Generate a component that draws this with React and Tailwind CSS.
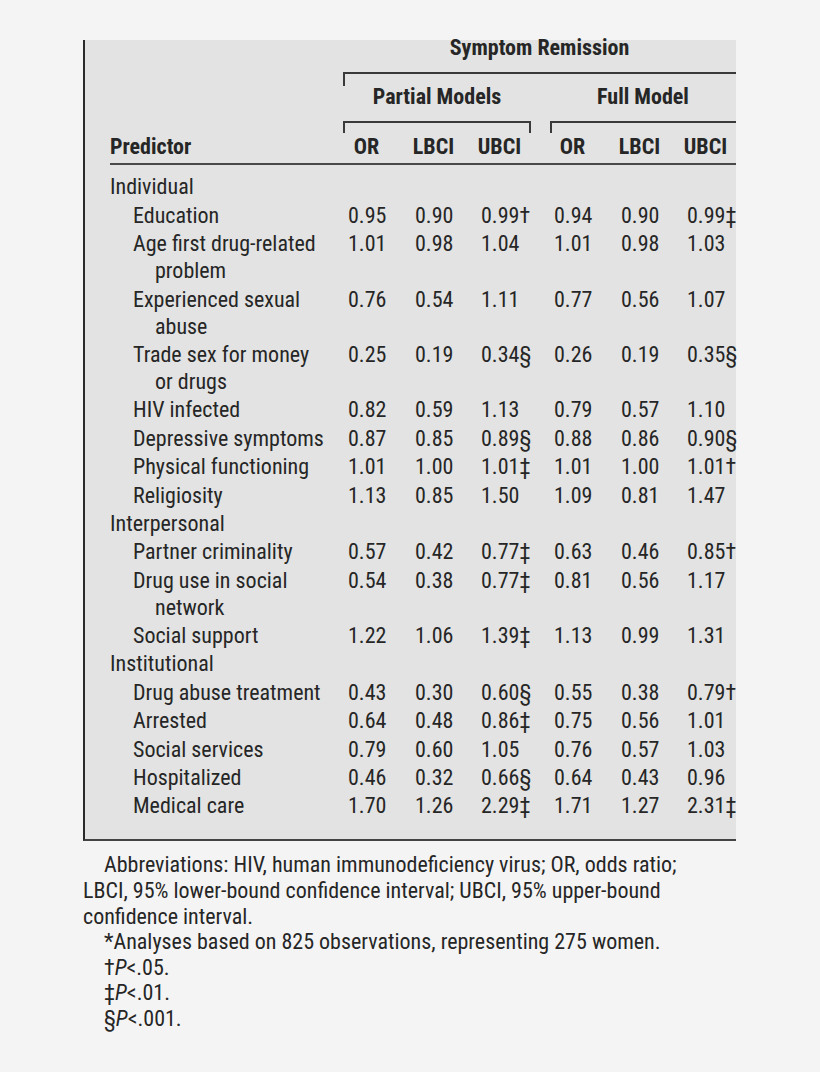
// Regression table: symptom remission predictors, with footnotes

const font = "font-['Roboto_Condensed','Roboto',sans-serif]";

const rows = [
  { group: 'Individual' },
  { label: ['Education'], v: ['0.95', '0.90', '0.99†', '0.94', '0.90', '0.99‡'] },
  { label: ['Age first drug-related', 'problem'], v: ['1.01', '0.98', '1.04', '1.01', '0.98', '1.03'] },
  { label: ['Experienced sexual', 'abuse'], v: ['0.76', '0.54', '1.11', '0.77', '0.56', '1.07'] },
  { label: ['Trade sex for money', 'or drugs'], v: ['0.25', '0.19', '0.34§', '0.26', '0.19', '0.35§'] },
  { label: ['HIV infected'], v: ['0.82', '0.59', '1.13', '0.79', '0.57', '1.10'] },
  { label: ['Depressive symptoms'], v: ['0.87', '0.85', '0.89§', '0.88', '0.86', '0.90§'] },
  { label: ['Physical functioning'], v: ['1.01', '1.00', '1.01‡', '1.01', '1.00', '1.01†'] },
  { label: ['Religiosity'], v: ['1.13', '0.85', '1.50', '1.09', '0.81', '1.47'] },
  { group: 'Interpersonal' },
  { label: ['Partner criminality'], v: ['0.57', '0.42', '0.77‡', '0.63', '0.46', '0.85†'] },
  { label: ['Drug use in social', 'network'], v: ['0.54', '0.38', '0.77‡', '0.81', '0.56', '1.17'] },
  { label: ['Social support'], v: ['1.22', '1.06', '1.39‡', '1.13', '0.99', '1.31'] },
  { group: 'Institutional' },
  { label: ['Drug abuse treatment'], v: ['0.43', '0.30', '0.60§', '0.55', '0.38', '0.79†'] },
  { label: ['Arrested'], v: ['0.64', '0.48', '0.86‡', '0.75', '0.56', '1.01'] },
  { label: ['Social services'], v: ['0.79', '0.60', '1.05', '0.76', '0.57', '1.03'] },
  { label: ['Hospitalized'], v: ['0.46', '0.32', '0.66§', '0.64', '0.43', '0.96'] },
  { label: ['Medical care'], v: ['1.70', '1.26', '2.29‡', '1.71', '1.27', '2.31‡'] },
];

const cols = 'grid grid-cols-[238px_67px_66px_73px_67px_66px_49px]';
const heads = ['OR', 'LBCI', 'UBCI', 'OR', 'LBCI', 'UBCI'];

const Row = ({ row }) => {
  if (row.group) {
    return (
      <div className={`${cols} pt-[1.4px]`}>
        <div>{row.group}</div>
      </div>
    );
  }
  return (
    <div className={`${cols} pt-[1.4px]`}>
      <div className="pl-[23px] whitespace-nowrap">
        {row.label.map((line, i) => (
          <div key={i} className={i > 0 ? 'pl-[22px]' : ''}>
            {line}
          </div>
        ))}
      </div>
      {row.v.map((val, i) => (
        <div key={i} className="whitespace-nowrap">
          {val}
        </div>
      ))}
    </div>
  );
};

export default function App() {
  return (
    <div className={`min-h-[1072px] bg-[#f4f4f4] pt-[40px] pl-[83px] text-[#262626] text-[22px] ${font}`}>
      {/* Table panel */}
      <div className="w-[653px] bg-[#e2e3e2] border-l-2 border-b-2 border-l-[#2a2a2a] border-b-[#444] pl-[25px] pb-[20px]">
        {/* Header */}
        <div className="font-bold">
          <div className="flex">
            <div className="w-[233px] shrink-0" />
            <div className="w-[393px] shrink-0">
              <div className="text-center leading-[16px]">Symptom Remission</div>
              <div className="mt-4 h-[14px] border-t-2 border-l-2 border-[#3a3a3a]" />
              <div className="flex leading-[22px]">
                <div className="w-[188px] text-center">Partial Models</div>
                <div className="w-[19px]" />
                <div className="w-[186px] text-center">Full Model</div>
              </div>
              <div className="flex mt-[13px]">
                <div className="w-[188px] h-[12px] border-t-2 border-x-2 border-[#3a3a3a]" />
                <div className="w-[19px]" />
                <div className="w-[186px] h-[12px] border-t-2 border-l-2 border-[#3a3a3a]" />
              </div>
            </div>
          </div>
          <div className={`${cols} leading-[22px] mt-[3px]`}>
            <div>Predictor</div>
            {heads.map((h, i) => (
              <div key={i} className="w-[37px] flex justify-center whitespace-nowrap">
                {h}
              </div>
            ))}
          </div>
          <div className="mt-[5px] h-[2px] bg-[#4a4a4a]" />
        </div>

        {/* Body */}
        <div className="mt-[7px] leading-[27px]">
          {rows.map((row, i) => (
            <Row key={i} row={row} />
          ))}
        </div>
      </div>

      {/* Footnotes */}
      <div className="mt-[11px] leading-[25.6px] whitespace-nowrap">
        <p className="pl-[21px]">Abbreviations: HIV, human immunodeficiency virus; OR, odds ratio;</p>
        <p>LBCI, 95% lower-bound confidence interval; UBCI, 95% upper-bound</p>
        <p>confidence interval.</p>
        <div className="pl-[21px]">
          <p>*Analyses based on 825 observations, representing 275 women.</p>
          <p>
            †<i>P</i>&lt;.05.
          </p>
          <p>
            ‡<i>P</i>&lt;.01.
          </p>
          <p>
            §<i>P</i>&lt;.001.
          </p>
        </div>
      </div>
    </div>
  );
}
